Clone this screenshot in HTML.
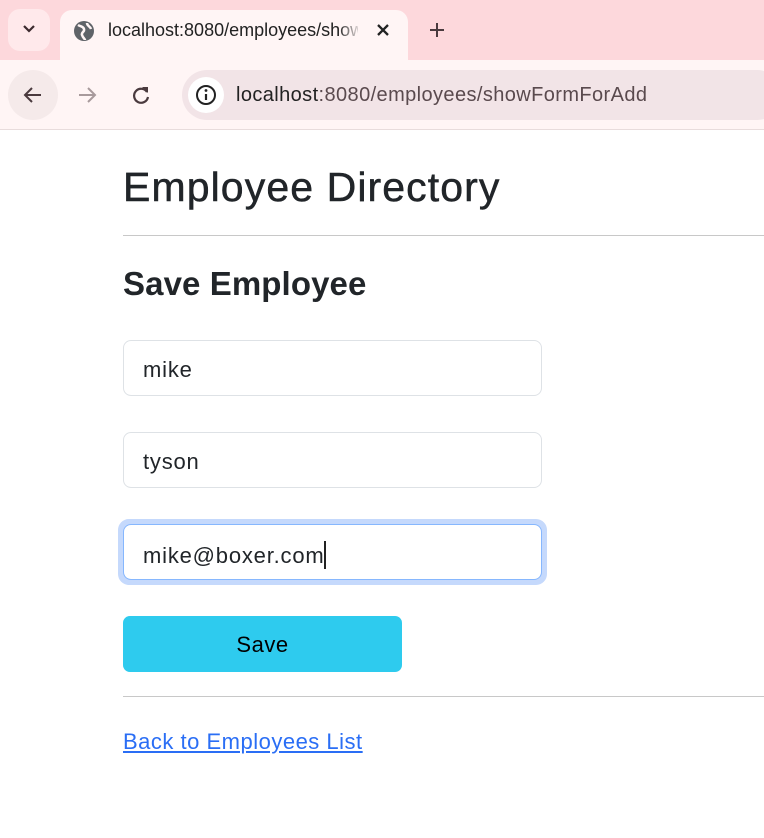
<!DOCTYPE html>
<html><head><meta charset="utf-8"><style>
*{box-sizing:border-box;margin:0;padding:0}
body{width:764px;height:838px;background:#fff;font-family:"Liberation Sans",sans-serif;position:relative;overflow:hidden;color:#212529}
.abs{position:absolute}
.top{left:0;top:0;width:764px;height:60px;background:#fdd8dc}
.tab{left:60px;top:10px;width:348px;height:52px;background:#fff5f5;border-radius:12px 12px 0 0}
.bar{left:0;top:60px;width:764px;height:70px;background:#fff5f5;border-bottom:1px solid #e8dcdc}
.addr{left:182px;top:70px;width:600px;height:50px;background:#f2e4e7;border-radius:25px}
.inp{left:123px;width:419px;height:56px;border:1px solid #dee2e6;border-radius:8px;font-size:22px;padding:16px 0 0 19px;color:#212529;background:#fff;letter-spacing:0.8px}
.hr{left:123px;width:641px;height:1px;background:#c8c8c8}
</style></head><body>
<div class="abs top"></div>
<div class="abs" style="left:8px;top:9px;width:42px;height:42px;background:#ffe9eb;border-radius:12px"></div>
<svg class="abs" style="left:22px;top:24px" width="14" height="10"><path d="M2 2l5 5 5-5" stroke="#3c2a2e" stroke-width="2.2" fill="none"/></svg>
<div class="abs tab"></div>
<svg class="abs" style="left:73px;top:20px" width="22" height="22"><circle cx="11" cy="11" r="10" fill="#5f6368"/><path d="M5 5c3 2 5 1 6 4s-3 3-2 6 3 4 3 5M14 3c0 3 3 3 4 6" stroke="#fff5f5" stroke-width="2.5" fill="none"/></svg>
<div class="abs" style="left:108px;top:20px;font-size:18px;color:#222;white-space:nowrap;width:250px;overflow:hidden">localhost:8080/employees/show</div>
<div class="abs" style="left:338px;top:14px;width:24px;height:30px;background:linear-gradient(90deg,rgba(255,245,245,0),#fff5f5)"></div>
<svg class="abs" style="left:376px;top:23px" width="14" height="14"><path d="M2 2l10 10M12 2L2 12" stroke="#222" stroke-width="2.3"/></svg>
<svg class="abs" style="left:428px;top:21px" width="18" height="18"><path d="M9 2v14M2 9h14" stroke="#4a3a3e" stroke-width="2"/></svg>
<div class="abs bar"></div>
<div class="abs" style="left:8px;top:70px;width:50px;height:50px;background:#f5eaea;border-radius:25px"></div>
<svg class="abs" style="left:22px;top:84px" width="22" height="22"><path d="M19 11H4M10 4l-7 7 7 7" stroke="#4a3a3e" stroke-width="2" fill="none"/></svg>
<svg class="abs" style="left:76px;top:84px" width="22" height="22"><path d="M3 11h15M12 4l7 7-7 7" stroke="#a89a9c" stroke-width="2" fill="none"/></svg>
<svg class="abs" style="left:130px;top:84px" width="22" height="22"><path d="M17 8A7 7 0 1 0 18 13" stroke="#4a3a3e" stroke-width="2.2" fill="none"/><path d="M12 3h6v6z" fill="#4a3a3e"/></svg>
<div class="abs addr"></div>
<div class="abs" style="left:188px;top:77px;width:36px;height:36px;background:#fff;border-radius:18px"></div>
<svg class="abs" style="left:195px;top:84px" width="22" height="22"><circle cx="11" cy="11" r="9" stroke="#222" stroke-width="2" fill="none"/><path d="M11 10v6" stroke="#222" stroke-width="2.2"/><circle cx="11" cy="6.5" r="1.4" fill="#222"/></svg>
<div class="abs" style="left:236px;top:84px;font-size:20px;color:#222;white-space:nowrap;letter-spacing:0.4px">localhost<span style="color:#5a4a4e">:8080/employees/showFormForAdd</span></div>

<div class="abs" style="left:123px;top:164px;font-size:41px;color:#212529;letter-spacing:1.1px;-webkit-text-stroke:0.5px #212529">Employee Directory</div>
<div class="abs hr" style="top:235px"></div>
<div class="abs" style="left:123px;top:265px;font-size:33px;font-weight:bold;letter-spacing:0.1px">Save Employee</div>
<div class="abs inp" style="top:340px">mike</div>
<div class="abs inp" style="top:432px">tyson</div>
<div class="abs" style="left:118px;top:519px;width:429px;height:66px;border-radius:11px;background:#c5d9fc"></div>
<div class="abs inp" style="top:524px;border-color:#86b7fe">mike@boxer.com<span style="display:inline-block;width:2px;height:28px;background:#222;vertical-align:-6px"></span></div>
<div class="abs" style="left:123px;top:616px;width:279px;height:56px;background:#2ecbee;border-radius:7px;text-align:center;font-size:22px;line-height:58px;color:#000;letter-spacing:0.5px">Save</div>
<div class="abs hr" style="top:696px"></div>
<div class="abs" style="left:123px;top:729px;font-size:22px;color:#2a6ef5;text-decoration:underline;letter-spacing:0.5px">Back to Employees List</div>
</body></html>
